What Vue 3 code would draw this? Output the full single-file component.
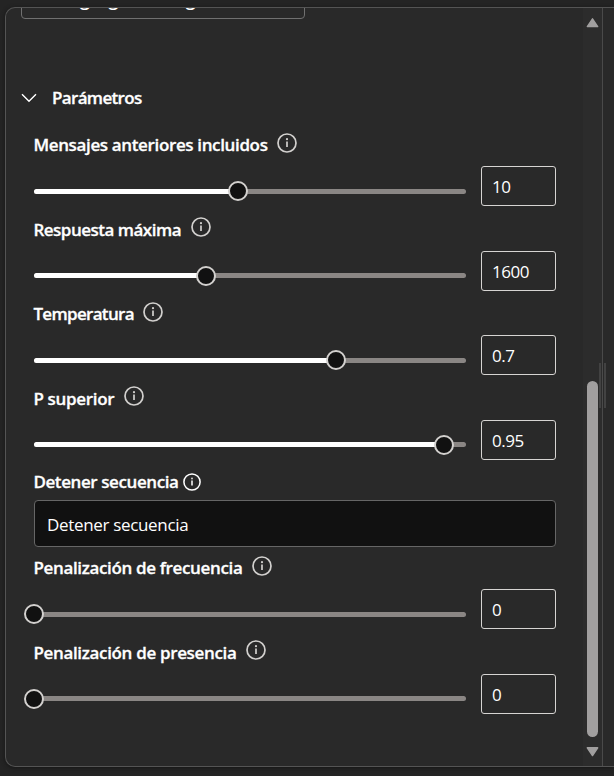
<script setup>
const upper = [
  { label: 'Mensajes anteriores incluidos', value: '10', pos: 204, width: 234, spacing: -0.36 },
  { label: 'Respuesta máxima', value: '1600', pos: 172, width: 148, spacing: -0.5 },
  { label: 'Temperatura', value: '0.7', pos: 302, width: 100, spacing: -0.68 },
  { label: 'P superior', value: '0.95', pos: 410, width: 81, spacing: -0.33 },
]
const lower = [
  { label: 'Penalización de frecuencia', value: '0', pos: 0, width: 209, spacing: -0.35 },
  { label: 'Penalización de presencia', value: '0', pos: 0, width: 203, spacing: -0.34 },
]
const groups = [upper, lower]
</script>

<template>
  <div class="page">
    <section class="panel">
      <div class="content">
        <div class="clip"><div class="button">Agregar configuración</div></div>
        <header class="heading">
          <svg class="chevron" width="16" height="10" viewBox="0 0 16 10"><path d="M1 1.2 8 8.3 15 1.2" /></svg>
          <span>Parámetros</span>
        </header>
        <template v-for="(group, g) in groups" :key="g">
          <div v-for="item in group" :key="item.label" class="row">
            <div class="caption">
              <span class="label" :style="{ width: item.width + 'px', letterSpacing: item.spacing + 'px' }">{{ item.label }}</span>
              <svg class="info" viewBox="0 0 20 20"><circle cx="10" cy="10" r="9" /><path d="M10 8.4v5.6" /><circle class="dot" cx="10" cy="6.2" r="1.1" /></svg>
            </div>
            <div class="controls">
              <div class="track">
                <div class="fill" :style="{ width: item.pos + 'px' }"></div>
                <div class="thumb" :style="{ left: item.pos - 10 + 'px' }"></div>
              </div>
              <div class="value">{{ item.value }}</div>
            </div>
          </div>
          <div v-if="g === 0" class="stop">
            <div class="stop-caption">
              <span class="label stop-label">Detener secuencia</span>
              <svg class="info small" viewBox="0 0 20 20"><circle cx="10" cy="10" r="9" /><path d="M10 8.4v5.6" /><circle class="dot" cx="10" cy="6.2" r="1.1" /></svg>
            </div>
            <div class="input">Detener secuencia</div>
          </div>
        </template>
      </div>
      <div class="scrollbar">
        <svg class="arrow" width="13" height="11" viewBox="0.5 0 13 11"><path d="M7 1.8 12.2 9.6H1.8Z" /></svg>
        <div class="bar"></div>
        <svg class="arrow" width="13" height="11" viewBox="0.5 0 13 11"><path d="M7 9.6 12.2 1.8H1.8Z" /></svg>
      </div>
      <div class="grip"></div>
    </section>
  </div>
</template>

<style>
body { background: #242424; overflow: hidden; }
</style>

<style scoped>
* { box-sizing: border-box; }
.page {
  height: 776px; padding: 7px 0 9px 5px; overflow: hidden;
  font-family: "Open Sans", "Noto Sans", sans-serif; color: #fff;
}
.panel {
  position: relative; display: flex; height: 760px; overflow: hidden;
  border: 1px solid #545454; border-right: 0; border-radius: 10px 0 0 10px;
  background: #292929; box-shadow: 0 1px 4px #161616;
}
.content { width: 577px; padding-left: 28px; flex: none; }
.clip { display: flex; align-items: flex-end; height: 11px; margin-left: -13px; overflow: hidden; }
.button {
  width: 284px; height: 40px; padding-left: 46px; border: 1px solid #707070;
  border-radius: 4px; font-size: 17.5px; font-weight: 600; line-height: 38px; letter-spacing: 0.4px; flex: none;
}
.heading {
  display: flex; align-items: center; gap: 15px; height: 30px;
  margin: 64px 0 20px -13px; font-size: 17px; font-weight: 600; line-height: 28px; letter-spacing: -0.67px;
  -webkit-text-stroke: 0.3px #fff;
}
.heading span { margin-top: -1px; }
.chevron path { fill: none; stroke: #fff; stroke-width: 1.4; }
.row { height: 84.6px; }
.caption { display: flex; gap: 9px; height: 33px; }
.label {
  margin-left: -0.6px; margin-right: 0.6px; font-size: 17px; font-weight: 600;
  line-height: 23px; white-space: nowrap; -webkit-text-stroke: 0.3px #fff;
}
.info { width: 20px; height: 20px; margin: -0.3px 0 0 -0.4px; fill: none; stroke: #d2d0ce; stroke-width: 1.7; flex: none; }
.info .dot { fill: #d2d0ce; stroke: none; }
.controls { display: flex; align-items: flex-start; gap: 15px; }
.track { position: relative; width: 432px; height: 5px; margin-top: 22.6px; border-radius: 3px; background: #8a8684; }
.fill { height: 5px; border-radius: 3px; background: #fff; }
.thumb {
  position: absolute; top: -7.6px; width: 20px; height: 20px;
  border: 2px solid #d2d0ce; border-radius: 50%; background: #111;
}
.value {
  width: 75px; height: 40px; padding-left: 10px; border: 1px solid #d6d4d2;
  border-radius: 3px; font-size: 17px; line-height: 40px; letter-spacing: -0.5px;
}
.stop { height: 84.6px; }
.stop-caption { display: flex; gap: 4px; height: 28.6px; }
.stop-label { width: 145px; line-height: 22px; letter-spacing: -0.41px; }
.small { width: 18px; height: 18px; margin-top: 2px; stroke: #fff; }
.input {
  width: 522px; height: 47px; padding-left: 12px; border: 1px solid #666;
  border-radius: 4px; background: #111; font-size: 17px; line-height: 47px; letter-spacing: -0.33px;
}
.scrollbar {
  display: flex; flex-direction: column; align-items: center; width: 20px;
  padding: 9px 0; border-right: 1px solid #4a4a4a; background: #2c2c2c; flex: none;
}
.arrow { fill: #a19f9f; stroke: #a19f9f; stroke-width: 1.4; stroke-linejoin: round; flex: none; }
.bar { width: 11px; height: 356px; margin: 353px 0 9px; border-radius: 6px; background: #a19f9f; flex: none; }
.grip {
  position: absolute; left: 593px; top: 355px; width: 7px; height: 45px;
  border: solid #424242; border-width: 0 2px;
}
</style>
